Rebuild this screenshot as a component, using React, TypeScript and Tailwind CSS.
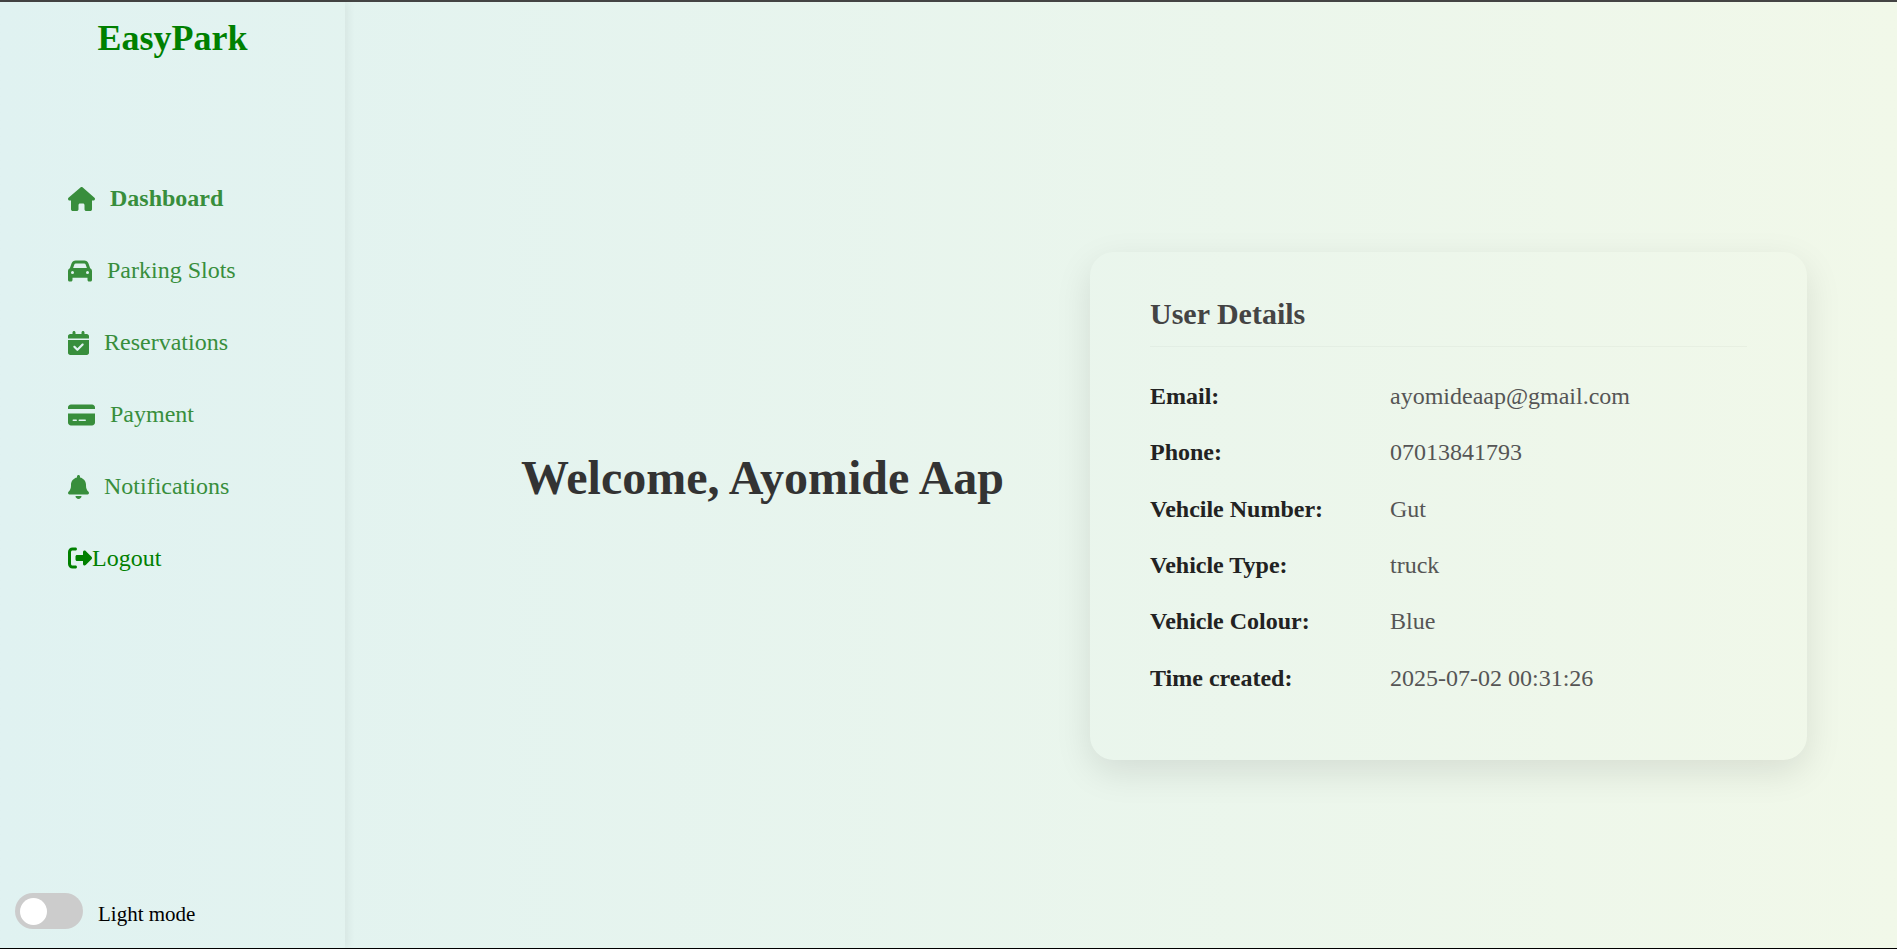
import { useState } from "react";
import type { IconType } from "react-icons";
import {
  FaBell,
  FaCalendarCheck,
  FaCar,
  FaCreditCard,
  FaHouse,
  FaRightFromBracket,
} from "react-icons/fa6";

type NavItem = {
  label: string;
  icon: IconType;
  iconWidth: string;
  active?: boolean;
};

const navItems: NavItem[] = [
  { label: "Dashboard", icon: FaHouse, iconWidth: "w-[27px]", active: true },
  { label: "Parking Slots", icon: FaCar, iconWidth: "w-[24px]" },
  { label: "Reservations", icon: FaCalendarCheck, iconWidth: "w-[21px]" },
  { label: "Payment", icon: FaCreditCard, iconWidth: "w-[27px]" },
  { label: "Notifications", icon: FaBell, iconWidth: "w-[21px]" },
];

const details = [
  { label: "Email:", value: "ayomideaap@gmail.com" },
  { label: "Phone:", value: "07013841793" },
  { label: "Vehcile Number:", value: "Gut" },
  { label: "Vehicle Type:", value: "truck" },
  { label: "Vehicle Colour:", value: "Blue" },
  { label: "Time created:", value: "2025-07-02 00:31:26" },
];

function Sidebar() {
  const [dark, setDark] = useState(false);
  return (
    <aside className="flex w-[345px] shrink-0 flex-col shadow-[3px_0_8px_rgba(0,0,0,0.06)]">
      <h2 className="pt-4 text-center text-[36px] leading-10 font-bold text-[#008000]">
        EasyPark
      </h2>
      <nav className="mt-[126px] pl-[68px]">
        <ul className="flex flex-col gap-11 text-[24px] leading-7">
          {navItems.map(({ label, icon: Icon, iconWidth, active }) => (
            <li key={label}>
              <a
                href="#"
                aria-current={active ? "page" : undefined}
                className={`flex items-center gap-[15px] text-[#388e3c] ${active ? "font-bold" : ""}`}
              >
                <Icon className={`mt-0.5 h-6 ${iconWidth}`} />
                {label}
              </a>
            </li>
          ))}
          <li>
            <a href="#" className="flex items-center text-[#008000]">
              <FaRightFromBracket className="size-6" />
              Logout
            </a>
          </li>
        </ul>
      </nav>
      <label className="mt-auto mb-[19px] flex items-end gap-[15px] pl-[15px] text-[21px] leading-[30px] text-black">
        <input
          type="checkbox"
          checked={dark}
          onChange={(e) => setDark(e.target.checked)}
          className="h-9 w-[68px] cursor-pointer appearance-none rounded-full bg-[#cccccc] p-[5px] before:block before:size-[27px] before:rounded-full before:bg-white before:content-[''] checked:bg-[#388e3c] checked:before:ml-auto"
        />
        Light mode
      </label>
    </aside>
  );
}

function UserCard() {
  return (
    <section className="w-[717px] rounded-[24px] px-[60px] pt-11 pb-[54px] shadow-[0_12px_36px_rgba(0,0,0,0.1)]">
      <h2 className="border-b border-black/3 pb-[14px] text-[30px] leading-9 font-bold text-[#444444]">
        User Details
      </h2>
      <dl className="mt-[21px] grid h-[338px] auto-rows-fr">
        {details.map(({ label, value }) => (
          <div key={label} className="flex items-center text-[24px] leading-7">
            <dt className="w-[240px] font-bold text-[#222222]">{label}</dt>
            <dd className="text-[#555555]">{value}</dd>
          </div>
        ))}
      </dl>
    </section>
  );
}

export default function App() {
  return (
    <div className="flex min-h-screen border-t-2 border-b border-t-[#444444] border-b-black bg-linear-to-r from-[#e0f2f1] to-[#f1f8e9] font-['Liberation_Serif',serif]">
      <Sidebar />
      <main className="flex flex-1 items-center justify-end gap-[86px] pt-[62px] pr-[90px]">
        <h1 className="pb-14 text-[48px] leading-[56px] font-bold text-[#333333]">
          Welcome, Ayomide Aap
        </h1>
        <UserCard />
      </main>
    </div>
  );
}
